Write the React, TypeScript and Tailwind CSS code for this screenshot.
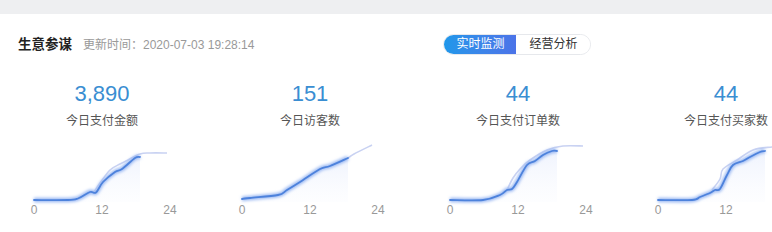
import React from 'react';

type Pt = [number, number];

interface Metric {
    value: string;
    label: string;
    line: Pt[];
    ghost: Pt[];
}

const metrics: Metric[] = [
    {
        value: '3,890',
        label: '今日支付金额',
        line: [[0, 58], [34, 58], [44, 56.5], [56, 50], [62, 50.5], [69, 40], [81, 30], [88, 27], [101, 16], [106, 15]],
        ghost: [[60, 50], [66, 41], [76, 28], [86, 22], [94, 18], [106, 12], [116, 11], [133, 11]],
    },
    {
        value: '151',
        label: '今日访客数',
        line: [[0, 57], [8, 56], [36, 53], [45, 48], [58, 40], [78, 27], [88, 24], [106, 16]],
        ghost: [[100, 19], [106, 16], [112, 12], [130, 3]],
    },
    {
        value: '44',
        label: '今日支付订单数',
        line: [[0, 58], [33, 58], [50, 53], [57, 48], [62, 47], [67, 40], [77, 23], [85, 19], [93, 13], [102, 9], [107, 9]],
        ghost: [[57, 48], [63, 36], [70, 27], [80, 18], [97, 8], [113, 4], [133, 4]],
    },
    {
        value: '44',
        label: '今日支付买家数',
        line: [[0, 58], [34, 58], [42, 55], [52, 51], [57, 48], [62, 47], [69, 33], [75, 23], [85, 19], [92, 15], [102, 10], [107, 9]],
        ghost: [[54, 48], [62, 37], [65, 27], [79, 18], [95, 8], [114, 5], [133, 4]],
    },
];

// catmull-rom -> bezier, keeps the line soft like the echarts "smooth" option
const toPath = (pts: Pt[]) => {
    let d = `M${pts[0][0]} ${pts[0][1]}`;
    for (let i = 0; i < pts.length - 1; i++) {
        const p0 = pts[i - 1] || pts[i];
        const p1 = pts[i];
        const p2 = pts[i + 1];
        const p3 = pts[i + 2] || p2;
        const c1x = p1[0] + (p2[0] - p0[0]) / 6;
        const c1y = p1[1] + (p2[1] - p0[1]) / 6;
        const c2x = p2[0] - (p3[0] - p1[0]) / 6;
        const c2y = p2[1] - (p3[1] - p1[1]) / 6;
        d += ` C${c1x.toFixed(1)} ${c1y.toFixed(1)} ${c2x.toFixed(1)} ${c2y.toFixed(1)} ${p2[0]} ${p2[1]}`;
    }
    return d;
};

function Sparkline({ line, ghost, id }: { line: Pt[]; ghost: Pt[]; id: number }) {
    const last = line[line.length - 1];
    const area = `${toPath(line)} L${last[0]} 60 L0 60 Z`;
    return (
        <svg width="140" height="62" viewBox="0 0 140 62" className="overflow-visible">
            <defs>
                <linearGradient id={`fill${id}`} x1="0" y1="0" x2="0" y2="1">
                    <stop offset="0%" stopColor="#e3eafc" stopOpacity="0.55" />
                    <stop offset="100%" stopColor="#f3f6fe" stopOpacity="0.15" />
                </linearGradient>
                <filter id={`glow${id}`} x="-10%" y="-30%" width="120%" height="160%">
                    <feGaussianBlur stdDeviation="1.8" />
                </filter>
            </defs>
            <path d={area} fill={`url(#fill${id})`} />
            <path d={toPath(ghost)} fill="none" stroke="#c9d2f2" strokeWidth="1.6" />
            <path d={toPath(line)} fill="none" stroke="#9ab8f2" strokeWidth="4.5" filter={`url(#glow${id})`} />
            <path d={toPath(line)} fill="none" stroke="#4d82dc" strokeWidth="1.8" strokeLinecap="round" />
        </svg>
    );
}

function MetricCard({ m, idx }: { m: Metric; idx: number }) {
    return (
        <div className="w-[204px] shrink-0 flex flex-col items-center">
            <div className="mt-[14px] h-[30px] leading-[30px] text-[22px] text-[#3a8ed2]">{m.value}</div>
            <div className="mt-[4px] text-[12px] leading-[16px] text-[#555]">{m.label}</div>
            <div className="mt-[13px] w-[140px] self-start ml-[34px]">
                <Sparkline line={m.line} ghost={m.ghost} id={idx} />
            </div>
            <div className="w-[136px] self-start ml-[34px] -mt-[1px] flex justify-between text-[12px] leading-[14px] text-[#999]">
                <span className="w-0 flex justify-center">0</span>
                <span className="w-0 flex justify-center">12</span>
                <span className="w-0 flex justify-center">24</span>
            </div>
        </div>
    );
}

export default function App() {
    return (
        <div
            className="w-[772px] h-[232px] overflow-hidden bg-white"
            style={{ fontFamily: '"Liberation Sans", "Noto Sans CJK SC", sans-serif' }}
        >
            <div className="h-[14px] bg-[#eeeff1]" />
            <div className="flex items-center h-[40px] mt-[11px] pl-[18px]">
                <span className="text-[13.5px] font-bold text-[#222]">生意参谋</span>
                <span className="ml-[11px] text-[12px] text-[#999]">更新时间：2020-07-03 19:28:14</span>
                <div className="ml-[189px] -mt-[2px] flex h-[21px] rounded-full border border-[#e6e8ec] overflow-hidden text-[12px]">
                    <div className="w-[72px] flex items-center justify-center text-white bg-gradient-to-r from-[#1d97ea] to-[#4b73e8]">
                        实时监测
                    </div>
                    <div className="w-[74px] flex items-center justify-center text-[#333] bg-white">
                        经营分析
                    </div>
                </div>
            </div>
            <div className="flex gap-1">
                {metrics.map((m, i) => (
                    <MetricCard key={i} m={m} idx={i} />
                ))}
            </div>
        </div>
    );
}
